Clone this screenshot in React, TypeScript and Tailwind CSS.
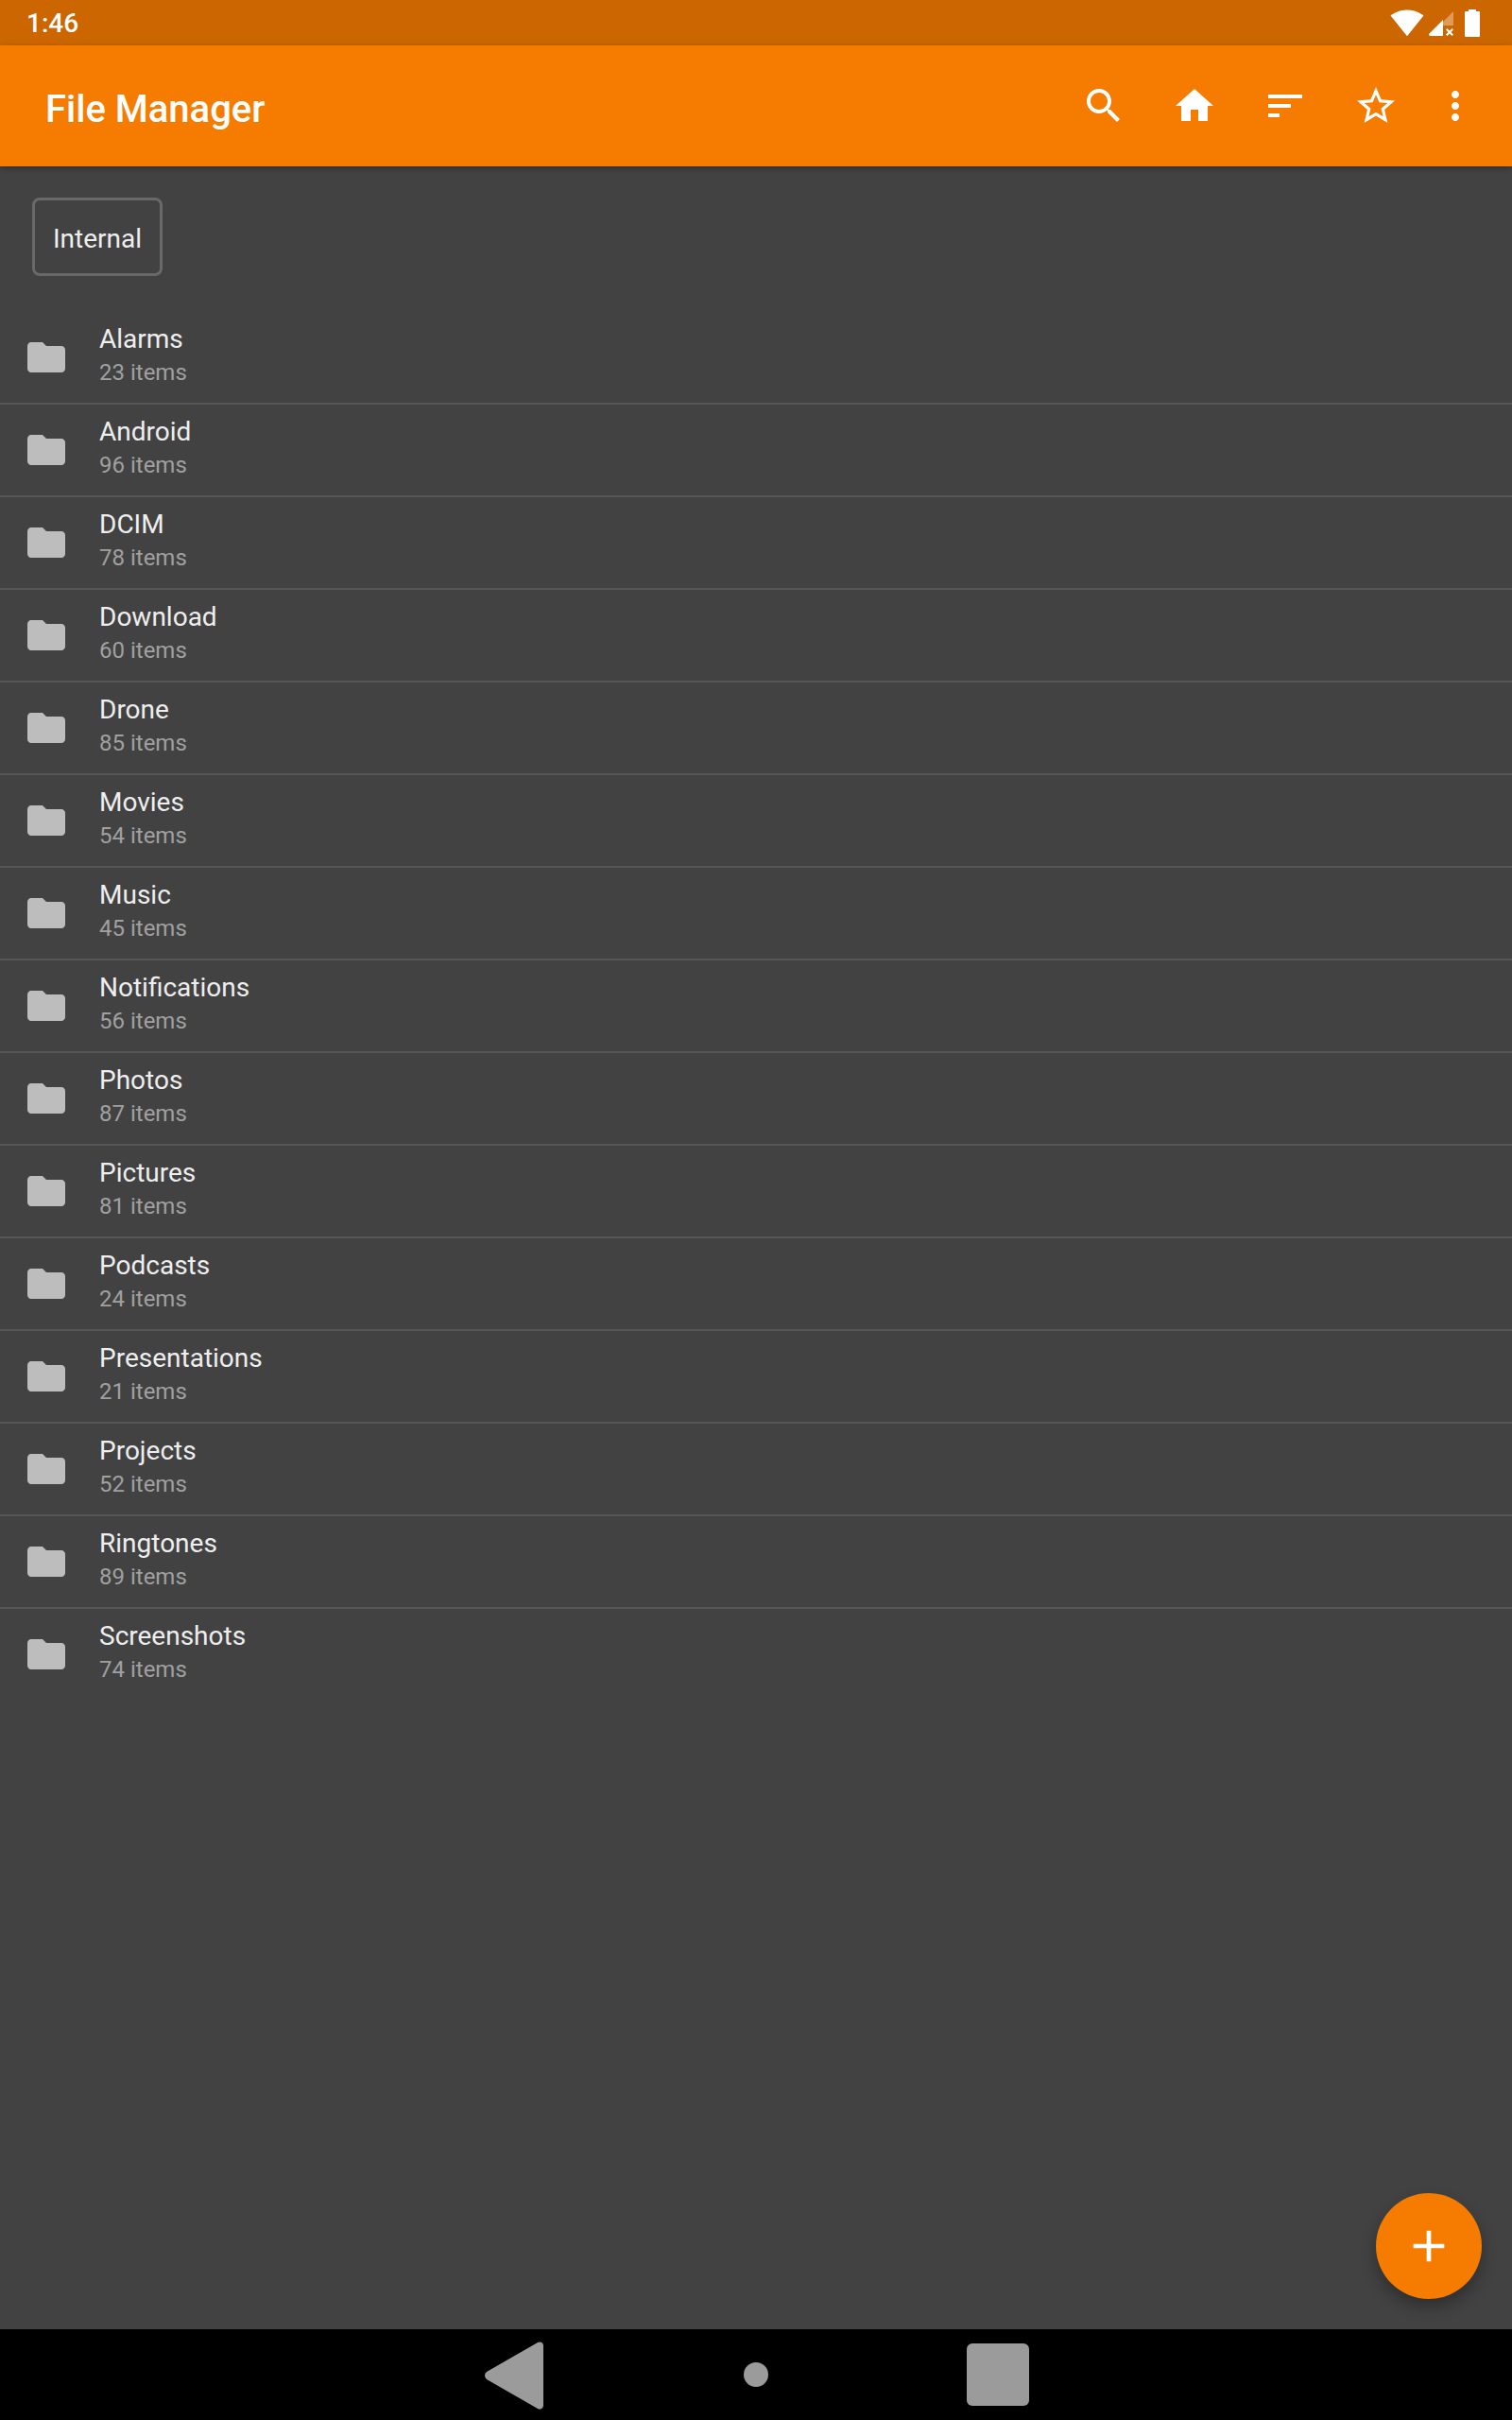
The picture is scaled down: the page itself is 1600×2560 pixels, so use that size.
import React from 'react';

const FOLDERS: { name: string; count: number }[] = [
  { name: 'Alarms', count: 23 },
  { name: 'Android', count: 96 },
  { name: 'DCIM', count: 78 },
  { name: 'Download', count: 60 },
  { name: 'Drone', count: 85 },
  { name: 'Movies', count: 54 },
  { name: 'Music', count: 45 },
  { name: 'Notifications', count: 56 },
  { name: 'Photos', count: 87 },
  { name: 'Pictures', count: 81 },
  { name: 'Podcasts', count: 24 },
  { name: 'Presentations', count: 21 },
  { name: 'Projects', count: 52 },
  { name: 'Ringtones', count: 89 },
  { name: 'Screenshots', count: 74 }
];

const ACTIONS: string[] = [
  'M15.5 14h-.79l-.28-.27C15.41 12.59 16 11.11 16 9.5 16 5.91 13.09 3 9.5 3S3 5.91 3 9.5 5.91 16 9.5 16c1.61 0 3.09-.59 4.23-1.57l.27.28v.79l5 4.99L20.49 19l-4.99-5zm-6 0C7.01 14 5 11.99 5 9.5S7.01 5 9.5 5 14 7.01 14 9.5 11.99 14 9.5 14z',
  'M10 20v-6h4v6h5v-8h3L12 3 2 12h3v8z',
  'M3 18h6v-2H3v2zM3 6v2h18V6H3zm0 7h12v-2H3v2z',
  'M22 9.24l-7.19-.62L12 2 9.19 8.63 2 9.24l5.46 4.73L5.82 21 12 17.27 18.18 21l-1.63-7.03L22 9.24zM12 15.4l-3.76 2.27 1-4.28-3.32-2.88 4.38-.38L12 6.1l1.71 4.04 4.38.38-3.32 2.88 1 4.28L12 15.4z'
];

const Icon: React.FC<{ d: string; className: string }> = ({ d, className }) => (
  <svg viewBox="0 0 24 24" className={className} fill="currentColor">
    <path d={d} />
  </svg>
);

const StatusBar: React.FC = () => (
  <div className="h-12 shrink-0 bg-[#cc6600] flex items-center text-white">
    <span className="ml-[28px] mt-[2px] text-[28px] leading-none font-medium">1:46</span>
    <div className="ml-auto mr-[34px] flex items-center">
      {/* wifi */}
      <svg viewBox="0 0 24 24" className="w-9 h-9" fill="currentColor">
        <path d="M12.01 21.49L23.64 7c-.45-.34-4.93-4-11.64-4C5.28 3 .81 6.66.36 7l11.64 14.5.01-.01z" />
      </svg>
      {/* signal, no sim */}
      <svg viewBox="0 0 26 26" className="w-[26px] h-[26px] ml-[5px] mt-[2px]" fill="currentColor">
        <path d="M26 0v15h-11v-2H13z" fillOpacity="0.35" />
        <path d="M15 9v17H1.500a1.500 1.500 0 0 1-1-2.500z" />
        <path d="M18 19.500l1.500-1.500 2.500 2.500 2.500-2.500 1.500 1.500-2.500 2.500 2.500 2.500-1.500 1.500-2.500-2.500-2.500 2.500-1.500-1.500 2.500-2.500z" />
      </svg>
      {/* battery */}
      <svg viewBox="0 0 16 29" className="w-4 h-[29px] ml-3" fill="currentColor">
        <path d="M4 0h8v2h3a1 1 0 0 1 1 1v25a1 1 0 0 1-1 1H1a1 1 0 0 1-1-1V3a1 1 0 0 1 1-1h3z" />
      </svg>
    </div>
  </div>
);

const Toolbar: React.FC = () => (
  <div className="relative z-10 h-32 shrink-0 bg-[#f57c00] flex items-center text-white shadow-[0_2px_6px_rgba(0,0,0,0.3)]">
    <h1 className="ml-12 mt-[7px] text-[40px] leading-none font-medium">File Manager</h1>
    <div className="ml-auto mr-6 flex items-center">
      {ACTIONS.map((d) => (
        <div key={d} className="w-24 h-24 flex items-center justify-center">
          <Icon d={d} className="w-12 h-12" />
        </div>
      ))}
      <div className="w-[72px] h-24 flex items-center justify-center">
        <Icon
          d="M12 8c1.100 0 2-.9 2-2s-.9-2-2-2-2 .9-2 2 .9 2 2 2zm0 2c-1.100 0-2 .9-2 2s.9 2 2 2 2-.9 2-2-.9-2-2-2zm0 6c-1.100 0-2 .9-2 2s.9 2 2 2 2-.9 2-2-.9-2-2-2z"
          className="w-12 h-12"
        />
      </div>
    </div>
  </div>
);

const FolderRow: React.FC<{ name: string; count: number; last: boolean }> = ({ name, count, last }) => (
  <div className={`flex items-center h-[98px] pl-[25px] border-b-2 ${last ? 'border-transparent' : 'border-[#565656]'}`}>
    <Icon
      d="M10 4H4c-1.100 0-1.990.9-1.990 2L2 18c0 1.100.9 2 2 2h16c1.100 0 2-.9 2-2V8c0-1.100-.9-2-2-2h-8l-2-2z"
      className="w-12 h-12 text-[#bdbdbd]"
    />
    <div className="ml-8 pb-[5px]">
      <div className="text-[28px] leading-9 text-[#eeeeee]">{name}</div>
      <div className="text-2xl leading-[34px] text-[#a0a0a0]">{count} items</div>
    </div>
  </div>
);

export default function App() {
  return (
    <div className="relative w-[1600px] h-[2560px] flex flex-col overflow-hidden bg-[#424242] font-[Roboto,sans-serif]">
      <StatusBar />
      <Toolbar />

      <div className="flex-1 min-h-0 pt-[33px]">
        <div className="ml-[34px] w-[138px] h-[83px] pt-1 flex items-center justify-center rounded-lg border-[3px] border-[#696969] text-[28px] text-[#eeeeee]">
          Internal
        </div>
        <div className="mt-[38px]">
          {FOLDERS.map((folder, i) => (
            <FolderRow key={folder.name} name={folder.name} count={folder.count} last={i === FOLDERS.length - 1} />
          ))}
        </div>
      </div>

      {/* floating add button */}
      <button className="absolute right-8 bottom-[128px] w-28 h-28 rounded-full bg-[#f57c00] text-white flex items-center justify-center shadow-[0_8px_16px_rgba(0,0,0,0.3)]">
        <Icon d="M19 13h-6v6h-2v-6H5v-2h6V5h2v6h6v2z" className="w-14 h-14" />
      </button>

      {/* android nav bar */}
      <div className="h-24 shrink-0 bg-black flex items-center text-[#9b9b9b]">
        <svg viewBox="0 0 64 72" className="w-16 h-[72px] ml-[512px] mt-[2px]" fill="currentColor">
          <path d="M57 1a4 4 0 0 1 6 3v64a4 4 0 0 1-6 3L3 40a5 5 0 0 1 0-8z" />
        </svg>
        <div className="w-[26px] h-[26px] ml-[211px] rounded-full bg-[#9b9b9b]" />
        <div className="w-[66px] h-[66px] ml-[210px] rounded-[6px] bg-[#9b9b9b]" />
      </div>
    </div>
  );
}
